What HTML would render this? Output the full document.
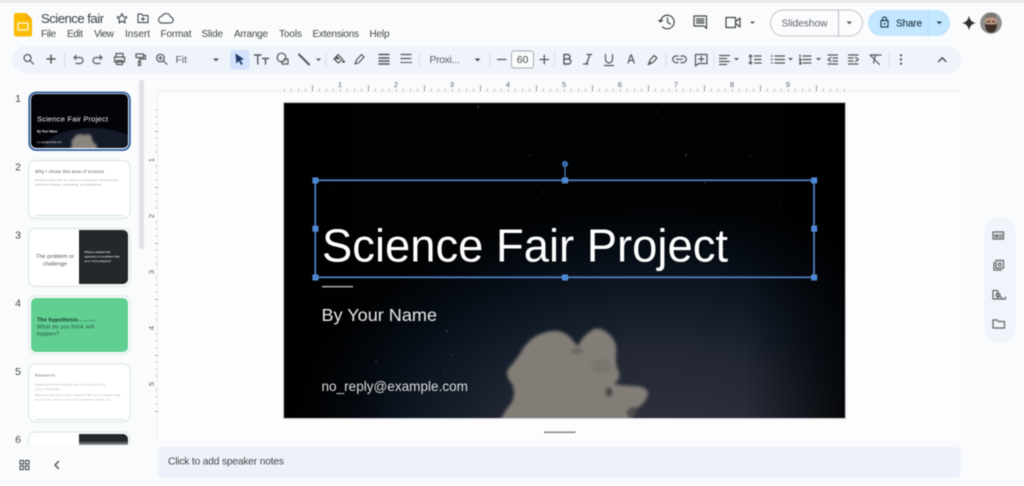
<!DOCTYPE html>
<html><head><meta charset="utf-8"><title>Science fair</title>
<style>
html,body{margin:0;padding:0;width:1024px;height:486px;overflow:hidden;background:#f9fbfd}
svg{display:block;filter:blur(.4px)}
text{font-family:"Liberation Sans",sans-serif}
.ic{fill:none;stroke:#54575a;stroke-width:1.200;stroke-linecap:round;stroke-linejoin:round}
.f{fill:#54575a;stroke:none}
.m{font-size:10px;fill:#444746}
</style></head><body>
<svg width="1024" height="486" viewBox="0 0 1024 486" xmlns="http://www.w3.org/2000/svg">
<defs>
<radialGradient id="sky" gradientUnits="userSpaceOnUse" cx="660" cy="470" r="380" gradientTransform="translate(0 141) scale(1 .7)">
<stop offset="0" stop-color="#343743"/><stop offset=".45" stop-color="#222733"/><stop offset=".61" stop-color="#131c29"/><stop offset=".83" stop-color="#060c14"/><stop offset="1" stop-color="#010203"/></radialGradient>
<linearGradient id="edge" x1="0" x2="1" y1="0" y2="0"><stop offset="0" stop-color="#000" stop-opacity=".7"/><stop offset=".2" stop-color="#000" stop-opacity="0"/><stop offset=".82" stop-color="#000" stop-opacity="0"/><stop offset="1" stop-color="#000" stop-opacity=".75"/></linearGradient>
<filter id="bl" x="-10%" y="-10%" width="120%" height="120%" color-interpolation-filters="sRGB"><feGaussianBlur stdDeviation="1.300"/></filter>
<filter id="cb" x="-10%" y="-10%" width="120%" height="120%" color-interpolation-filters="sRGB"><feGaussianBlur stdDeviation="1.700"/></filter>
<clipPath id="sc"><rect x="284" y="103" width="561" height="315"/></clipPath>
<clipPath id="t1"><rect x="31" y="94" width="97" height="54" rx="5"/></clipPath>
<linearGradient id="fade" x1="0" x2="0" y1="0" y2="1"><stop offset="0" stop-color="#f9fbfd" stop-opacity="0"/><stop offset="1" stop-color="#f9fbfd"/></linearGradient>
</defs>

<rect width="1024" height="486" fill="#f9fbfd"/>
<rect width="1024" height="2.500" fill="#e6e7e9"/>

<!-- logo -->
<path d="M16 13h10l6 6v15.500a2 2 0 0 1-2 2H16a2 2 0 0 1-2-2V15a2 2 0 0 1 2-2z" fill="#fbbc04"/>
<path d="M26 13l6 6h-6z" fill="#f6a609"/>
<rect x="18" y="23" width="10" height="7" rx=".8" fill="none" stroke="#fff3c4" stroke-width="1.500"/>

<text x="41" y="23" font-size="13.200" fill="#3c4043" textLength="63">Science fair</text>
<path class="ic" d="M122 13.500l1.500 3.200 3.500.4-2.600 2.400.7 3.500-3.100-1.800-3.100 1.800.7-3.500-2.600-2.400 3.500-.4z"/>
<path class="ic" d="M138 14h3.500l1.200 1.500h5.300v7h-10zM143 17.500v3M141.500 19h3"/>
<path class="ic" d="M161 23h9a3 3 0 0 0 .5-6 4.500 4.500 0 0 0-8.500-.8 3.500 3.500 0 0 0-1 6.800z"/>

<text class="m" x="41" y="37" textLength="15">File</text>
<text class="m" x="67" y="37" textLength="16">Edit</text>
<text class="m" x="94" y="37" textLength="20">View</text>
<text class="m" x="125" y="37" textLength="25">Insert</text>
<text class="m" x="160.500" y="37" textLength="31">Format</text>
<text class="m" x="201.500" y="37" textLength="21.500">Slide</text>
<text class="m" x="234" y="37" textLength="34">Arrange</text>
<text class="m" x="279" y="37" textLength="23">Tools</text>
<text class="m" x="312.500" y="37" textLength="46.500">Extensions</text>
<text class="m" x="369.500" y="37" textLength="20">Help</text>

<!-- top right -->
<g class="ic" stroke-width="1.500" style="stroke:#444746">
<path d="M660.500 22a6.800 6.800 0 1 1 2 4.800M660.500 22l-1.800-1.800M660.500 22l2-1.800M667.500 18v4.300l3 1.700"/>
<path d="M694 16h12.500v12.500l-2.500-2.500H694zM696.500 19h7.500M696.500 21h7.500M696.500 23h7.500"/>
<path d="M730 18.500h-3.500v10h9.500v-10h-6M737 22l3.500-3v9l-3.500-3" transform="translate(-.5 -1)"/>
</g>
<path class="f" d="M750 21.500h5l-2.500 2.500z"/>

<rect x="770.500" y="10" width="92" height="26" rx="13" fill="#fbfcfe" stroke="#c0c3c6"/>
<line x1="838.500" y1="10" x2="838.500" y2="36" stroke="#b8bbbe"/>
<text x="781.500" y="26.500" font-size="10.200" fill="#5f6368" textLength="46">Slideshow</text>
<path class="f" d="M846.500 21.500h5.500l-2.750 2.800z"/>

<rect x="868" y="10" width="82" height="26" rx="13" fill="#c2e7ff"/>
<line x1="928.500" y1="10" x2="928.500" y2="36" stroke="#afdbf7"/>
<path class="ic" style="stroke:#27404f" d="M881 20.500h7v6.500h-7zM882.500 20.500v-1.500a2 2 0 0 1 4 0v1.500"/>
<circle cx="884.500" cy="23.700" r=".9" fill="#27404f"/>
<text x="896" y="26.500" font-size="10" fill="#2f4453" textLength="26" stroke="#2f4453" stroke-width=".2">Share</text>
<path d="M936.500 21.500h5.500l-2.750 2.800z" fill="#27404f"/>

<path d="M969 15.500c.8 4.500 2.700 6.600 7 7.500-4.300.9-6.200 3-7 7.500-.8-4.500-2.700-6.600-7-7.500 4.300-.9 6.200-3 7-7.500z" fill="#2d2f31"/>

<circle cx="991" cy="23" r="10.800" fill="#8f8f8c"/>
<ellipse cx="991" cy="21.500" rx="5.800" ry="7" fill="#b9957f"/>
<path d="M985 19c-.5-7 12.500-7.500 12 0-3-2.500-9-2.500-12 0z" fill="#77746f"/>
<path d="M985 23c0 5 1 9.500 6 9.700 5-.2 6-4.700 6-9.700l-1.500 1.500h-9z" fill="#3f312a"/>
<rect x="987" y="21" width="3" height="1.200" fill="#3f312a"/><rect x="992" y="21" width="3" height="1.200" fill="#3f312a"/>

<!-- toolbar -->
<rect x="12" y="46" width="949" height="27" rx="13.500" fill="#eff3fa"/>
<rect x="230" y="50" width="19.500" height="19.500" rx="3" fill="#d3e3fd"/>
<g stroke="#dadde2"><line x1="64.500" y1="52" x2="64.500" y2="67"/><line x1="326" y1="52" x2="326" y2="67"/><line x1="419.500" y1="52" x2="419.500" y2="67"/><line x1="490" y1="52" x2="490" y2="67"/><line x1="554.500" y1="52" x2="554.500" y2="67"/><line x1="666" y1="52" x2="666" y2="67"/><line x1="714" y1="52" x2="714" y2="67"/><line x1="889" y1="52" x2="889" y2="67"/></g>
<g class="ic">
<circle cx="27.500" cy="58" r="3.500"/><path d="M30 60.500l3.500 3.500"/>
<path d="M47 59h8M51 55v8" stroke-width="1.500"/>
<path d="M74 57.500h6a3 3 0 0 1 0 6h-4M74 57.500l2-2M74 57.500l2 2"/>
<path d="M102 57.500h-6a3 3 0 0 0 0 6h4M102 57.500l-2-2M102 57.500l-2 2"/>
<path d="M116 57v-3.500h7V57M114.500 57h10v5h-10zM116.500 60.500h6V64.500h-6z"/>
<path d="M136 54h7.500v3.500H136zM143.500 55.500h2v3.500h-6v2M138.500 61.500h2v4h-2z"/>
<circle cx="160.500" cy="58" r="3.800"/><path d="M163.500 61l3.300 3.300M159 58h3M160.500 56.500v3"/>
<path d="M261 55h-6.500M257.800 55v9M265.500 58.500v5.500M262.500 58.500h6" stroke-width="1.400"/>
<circle cx="281.500" cy="57.500" r="4.300"/><path d="M284 59h4v5h-6v-3"/>
<path d="M299 54.500l10 10" stroke-width="2"/>
<path d="M334 59l4-4.500 4.500 4.500-4 4z"/>
<path d="M355 64l1.500-4 5-5.500 2.500 2.500-5 5.500z"/>
<path d="M379 54.500h10M379 58h10M379 61h10M379 64h10" stroke-width="1.500"/>
<path d="M401 54.500h10M401 58.500h10M401 62.500h1.500M404 62.500h1.500M407 62.500h1.500M410 62.500h1.500"/>
<path d="M497.500 59.500h8.500M540 59.500h8.500M544.300 55.300v8.500" stroke-width="1.300"/>
<path d="M564 54.500h3.700a2.200 2.200 0 0 1 0 4.500H564zM564 59h4.300a2.400 2.400 0 0 1 0 5H564z" stroke-width="1.400"/>
<path d="M587 54.500h4.500M586 64h-2.500M590 54.500l-3.500 9.500M584 64h4" stroke-width="1.300"/>
<path d="M605.500 54.500v5a3.500 3.500 0 0 0 7 0v-5M604.500 65.500h9"/>
<path d="M628 63l2.800-8h.6l2.800 8M629 60.500h4"/>
<path d="M649 63l1-3 4-4.500 3 2.500-4 4.500z"/><path d="M648 64.500l3-1" />
<path d="M678 56h-2a3.300 3.300 0 0 0 0 6.600h2M681 56h2a3.300 3.300 0 0 1 0 6.600h-2M676.500 59.300h6"/>
<path d="M695.500 54.500h11.500v9h-8.500l-3 2.500zM701.300 56.500v5M698.800 59h5"/>
<path d="M719.500 55.500h10M719.500 58.500h7M719.500 61.500h10M719.500 64.500h7"/>
<path d="M749 56.500l1.500-1.500 1.500 1.500M750.500 55v9M749 62.500l1.500 1.500 1.500-1.500M754.500 56h6.500M754.500 59.500h6.500M754.500 63h6.500"/>
<path d="M775 56h9.500M775 59.500h9.500M775 63h9.500M771.500 56h.8M771.500 59.500h.8M771.500 63h.8"/>
<path d="M803 56h8M803 59.500h8M803 63h8M800 55v2M799.500 59h1.500l-1.500 1.500h1.500M799.500 62.500h1.500v1.500h-1.500"/>
<path d="M828 55h9.500M833 58h4.500M833 61h4.500M828 64h9.500M831 57.500l-3 2 3 2"/>
<path d="M850 55h9.500M850 58h4.500M850 61h4.500M850 64h9.500M857 57.500l3 2-3 2" transform="translate(-1.500 0)"/>
<path d="M871 55h10M875.500 55l-2 8M870 55l9.500 9.500"/>
<path d="M938.500 61.500l3.700-3.700 3.700 3.700" stroke-width="1.500"/>
</g>
<path d="M235.500 53.500l8.500 5.800-3.500.8 2.300 4-1.600.9-2.300-4-2.600 2.500z" fill="#1f3b68"/>
<path class="f" d="M213 58.500h6l-3 3zM316 58.500h5l-2.500 2.500zM474.500 58.500h6l-3 3zM734 58h5l-2.500 2.500zM788 58h5l-2.500 2.500zM816 58h5l-2.500 2.500z"/>
<path class="f" d="M337 55.800l-3.700 3.400h7.400z"/><circle cx="343.500" cy="61.500" r="1.300" fill="#444746"/>
<circle cx="901" cy="55.300" r="1.100" fill="#444746"/><circle cx="901" cy="59.500" r="1.100" fill="#444746"/><circle cx="901" cy="63.700" r="1.100" fill="#444746"/>
<text x="175.500" y="63" font-size="10.400" fill="#5f6368">Fit</text>
<text x="429.500" y="63" font-size="10.400" fill="#5f6368" textLength="30">Proxi...</text>
<rect x="511.500" y="51" width="22" height="17" rx="2.500" fill="#f9fbfd" stroke="#a8abae"/>
<text x="522.500" y="63" font-size="10.400" fill="#444746" text-anchor="middle">60</text>

<!-- canvas -->
<rect x="157" y="91" width="804" height="350" fill="#fdfdfe"/>
<line x1="157" y1="91.500" x2="961" y2="91.500" stroke="#eceef1"/>
<line x1="157.500" y1="91" x2="157.500" y2="441" stroke="#eceef1"/>

<!-- rulers -->
<g fill="#5f6368" font-size="7.500" text-anchor="middle">
<text x="340" y="87">1</text><text x="396" y="87">2</text><text x="452" y="87">3</text><text x="508" y="87">4</text><text x="564" y="87">5</text><text x="620" y="87">6</text><text x="676" y="87">7</text><text x="732" y="87">8</text><text x="788" y="87">9</text>
<text transform="translate(154 160) rotate(-90)">1</text><text transform="translate(154 216) rotate(-90)">2</text><text transform="translate(154 272) rotate(-90)">3</text><text transform="translate(154 328) rotate(-90)">4</text><text transform="translate(154 384) rotate(-90)">5</text>
</g>
<path stroke="#a4a7ab" stroke-dasharray=".8 6.200" d="M284 90H845" style="stroke-width:2.500"/>
<path stroke="#8d9094" stroke-width=".8" d="M312.500 85v6M368.500 85v6M424.500 85v6M480.500 85v6M536.500 85v6M592.500 85v6M648.500 85v6M704.500 85v6M760.500 85v6M816.500 85v6M155 131.500h3M155 187.500h3M155 243.500h3M155 299.500h3M155 355.500h3M155 411.500h3"/>
<path stroke="#b3b6ba" stroke-width=".7" d="M155.500 110h2M155.500 117h2M155.500 124h2M155.500 138h2M155.500 145h2M155.500 152h2M155.500 166h2M155.500 173h2M155.500 180h2M155.500 194h2M155.500 201h2M155.500 208h2M155.500 222h2M155.500 229h2M155.500 236h2M155.500 250h2M155.500 257h2M155.500 264h2M155.500 278h2M155.500 285h2M155.500 292h2M155.500 306h2M155.500 313h2M155.500 320h2M155.500 334h2M155.500 341h2M155.500 348h2M155.500 362h2M155.500 369h2M155.500 376h2M155.500 390h2M155.500 397h2M155.500 404h2"/>

<!-- slide -->
<rect x="283.500" y="102.500" width="562" height="316" fill="none" stroke="#d2d3d6"/>
<g clip-path="url(#sc)">
<rect x="284" y="103" width="561" height="315" fill="#010204"/>
<rect x="284" y="103" width="561" height="315" fill="url(#sky)"/>
<rect x="284" y="103" width="561" height="315" fill="url(#edge)"/>
<g filter="url(#cb)" fill="#827e77">
<path d="M498 424Q504 412 512 402Q516 392 512 384Q505 376 508 369Q516 360 521 352Q526 342 536 336Q548 330 558 331Q568 333 574 342L578 346Q582 336 594 329Q602 327 610 335Q618 343 616 355Q615 365 619 372Q621 379 614 384Q624 386 636 386Q646 387 648 392Q648 400 640 406Q634 411 632 424z"/>
<circle cx="514" cy="371" r="5"/><circle cx="517" cy="388" r="4"/>
</g>
<g filter="url(#bl)">
<ellipse cx="609" cy="392" rx="3.500" ry="4.500" fill="#3e3c3d" opacity=".8"/>
<ellipse cx="577" cy="351" rx="6" ry="3" fill="#5a5754" opacity=".55"/>
<ellipse cx="634" cy="413" rx="7" ry="6" fill="#34343b" opacity=".65"/>
<ellipse cx="601" cy="366" rx="10" ry="7" fill="#6b6863" opacity=".4"/>
</g>
<g fill="#aeb2b8" opacity=".6"><circle cx="478" cy="107" r=".7"/><circle cx="686" cy="155" r=".8"/><circle cx="723" cy="249" r=".6"/><circle cx="376" cy="362" r=".6"/><circle cx="445" cy="370" r=".5"/><circle cx="447" cy="331" r=".6"/><circle cx="530" cy="155" r=".5"/><circle cx="543" cy="192" r=".5"/><circle cx="750" cy="156" r=".5"/><circle cx="657" cy="112" r=".5"/><circle cx="705" cy="183" r=".5"/><circle cx="452" cy="355" r=".5"/><circle cx="780" cy="205" r=".4"/><circle cx="330" cy="190" r=".4"/></g>
</g>
<text x="322" y="261.500" font-size="46" fill="#fff" textLength="406" lengthAdjust="spacingAndGlyphs">Science Fair Project</text>
<rect x="322" y="286" width="31" height="1.300" fill="#c6c7c9"/>
<text x="321.500" y="321" font-size="17.500" fill="#e8e9ea" textLength="115.500" lengthAdjust="spacingAndGlyphs">By Your Name</text>
<text x="321.500" y="391" font-size="13.600" fill="#dcddde" textLength="146.500" lengthAdjust="spacingAndGlyphs">no_reply@example.com</text>

<!-- selection -->
<rect x="315.300" y="180.300" width="498.700" height="97" fill="none" stroke="#4f7cbd" stroke-width="1.800"/>
<line x1="565" y1="164" x2="565" y2="180" stroke="#4f7cbd" stroke-width="1.200"/>
<circle cx="565" cy="164" r="2.500" fill="#2f5f9f" stroke="#4f86d4"/>
<g fill="#4a86d8" stroke="#6f9fdd" stroke-width=".5">
<rect x="312.700" y="177.700" width="5.400" height="5.400"/><rect x="562.300" y="177.700" width="5.400" height="5.400"/><rect x="811.500" y="177.700" width="5.400" height="5.400"/>
<rect x="312.700" y="226" width="5.400" height="5.400"/><rect x="811.500" y="226" width="5.400" height="5.400"/>
<rect x="312.700" y="274.800" width="5.400" height="5.400"/><rect x="562.300" y="274.800" width="5.400" height="5.400"/><rect x="811.500" y="274.800" width="5.400" height="5.400"/>
</g>

<line x1="544" y1="432.300" x2="575.500" y2="432.300" stroke="#85878a" stroke-width="1.500"/>

<!-- notes -->
<rect x="158" y="447" width="803" height="31" rx="5" fill="#edf2fa"/>
<text x="168" y="464.500" font-size="10.200" fill="#444746" textLength="116">Click to add speaker notes</text>

<!-- right panel -->
<rect x="984" y="217" width="32" height="126" rx="16" fill="#f1f4fa"/>
<g class="ic" stroke-width="1.100" style="stroke:#5f6266">
<path d="M993 232h10.500v7H993zM995 235h3v2h-3zM999.500 235h2.500M999.500 237h2.500"/>
<path d="M996 260.500h7.500v7.500H996zM994 262.500v7.500h7.500M999.800 263a1.500 1.500 0 1 0 .01 0"/>
<path d="M993 290.500h4l1 1v7.500h7.500v-2M993 290.500v8.500h5M998 293a2 2 0 1 0 .01 0M1000 296l2 2"/>
<path d="M993 320h4l1.500 1.500h6v6.500H993z"/>
</g>

<!-- thumbnails -->
<g font-size="10.500" fill="#444746" text-anchor="middle">
<text x="18" y="102">1</text><text x="18" y="170.500">2</text><text x="18" y="238.500">3</text><text x="18" y="306.500">4</text><text x="18" y="375">5</text><text x="18" y="443">6</text>
</g>
<rect x="139" y="80" width="5" height="169" rx="2" fill="#dfe1e4"/>

<rect x="29.300" y="92.500" width="100.500" height="57.500" rx="7" fill="#fff" stroke="#2a5c9a" stroke-width="1.800"/>
<g clip-path="url(#t1)">
<rect x="31" y="94" width="97" height="54" fill="#02040a"/>
<ellipse cx="92" cy="152" rx="50" ry="24" fill="#161d2a" opacity=".9"/>
<path filter="url(#bl)" d="M70 150l2-6-1-3 3-3 2-3 5-1 4 1 3-1 3 1 1 4 2 4 3 2v5z" fill="#8a867f"/>
</g>
<text x="37" y="121.500" font-size="7.600" fill="#eee" textLength="71">Science Fair Project</text>
<text x="37" y="132.500" font-size="3.200" fill="#ddd" font-weight="700" textLength="20.500">By Your Name</text>
<text x="37" y="143" font-size="2.500" fill="#ddd" textLength="25">no_reply@example.com</text>

<g fill="#fff" stroke="#dfe8e5" stroke-width="1.200">
<rect x="28.600" y="160.500" width="101.500" height="58" rx="7"/>
<rect x="28.600" y="228.500" width="101.500" height="58" rx="7"/>
<rect x="28.600" y="296" width="101.500" height="58" rx="7"/>
<rect x="28.600" y="364" width="101.500" height="58" rx="7"/>
<rect x="28.600" y="432" width="101.500" height="58" rx="7"/>
</g>
<path d="M35 215.500h89M35 419.500h89" stroke="#cfe6da" stroke-width="1"/>
<text x="35" y="172.800" font-size="4.400" fill="#555" textLength="69">Why I chose this area of science</text>
<text x="35" y="181" font-size="2.900" fill="#a0a3a6" textLength="83">Please explain why you chose to investigate this particular</text>
<text x="35" y="185.500" font-size="2.900" fill="#888" textLength="66">branch of science, computing, or engineering</text>

<path d="M79 230h44a5 5 0 0 1 5 5v44a5 5 0 0 1-5 5H79z" fill="#25282a"/>
<text x="55" y="258" font-size="5.600" fill="#555" text-anchor="middle">The problem or</text>
<text x="55" y="265.500" font-size="5.600" fill="#555" text-anchor="middle">challenge</text>
<g font-size="2.900" fill="#ddd" font-weight="700"><text x="84.500" y="253" textLength="26">Please explain the</text><text x="84.500" y="257.500" textLength="35">question or problem that</text><text x="84.500" y="262" textLength="26">you investigated</text></g>

<rect x="31" y="298" width="97" height="54" rx="5" fill="#62cf92"/>
<text x="37" y="321.500" font-size="5.400" font-weight="700" fill="#14352a" textLength="41">The hypothesis</text>
<text x="79" y="321.500" font-size="2.600" fill="#2a6a4c" textLength="17">for a problem</text>
<text x="37" y="328.500" font-size="5.400" fill="#20503c" textLength="57">What do you think will</text>
<text x="37" y="335.500" font-size="5.400" fill="#20503c" textLength="22">happen?</text>

<text x="35" y="376.500" font-size="4" fill="#555" textLength="20">Research</text>
<g font-size="2.700" fill="#a2a5a8"><text x="35" y="385.500" textLength="70">Explain all of the research you've done about this</text><text x="35" y="389.800" textLength="25">topic/challenge</text><text x="35" y="396" textLength="85">What was the goal of your research? Be sure to explain how</text><text x="35" y="400.500" textLength="76">you found it and sources and important details you</text></g>

<path d="M79 434h44a5 5 0 0 1 5 5v6H79z" fill="#25282a"/>
<rect x="0" y="441" width="150" height="7" fill="url(#fade)"/>
<rect x="0" y="446" width="150" height="40" fill="#f9fbfd"/>

<g class="ic" stroke-width="1.200">
<path d="M20 460.500h3.500V464H20zM25.500 460.500H29V464h-3.500zM20 466h3.500v3.500H20zM25.500 466H29v3.500h-3.500z"/>
<path d="M58.500 461.500L55 465l3.500 3.500" stroke-width="1.500"/>
</g>
</svg>
</body></html>
